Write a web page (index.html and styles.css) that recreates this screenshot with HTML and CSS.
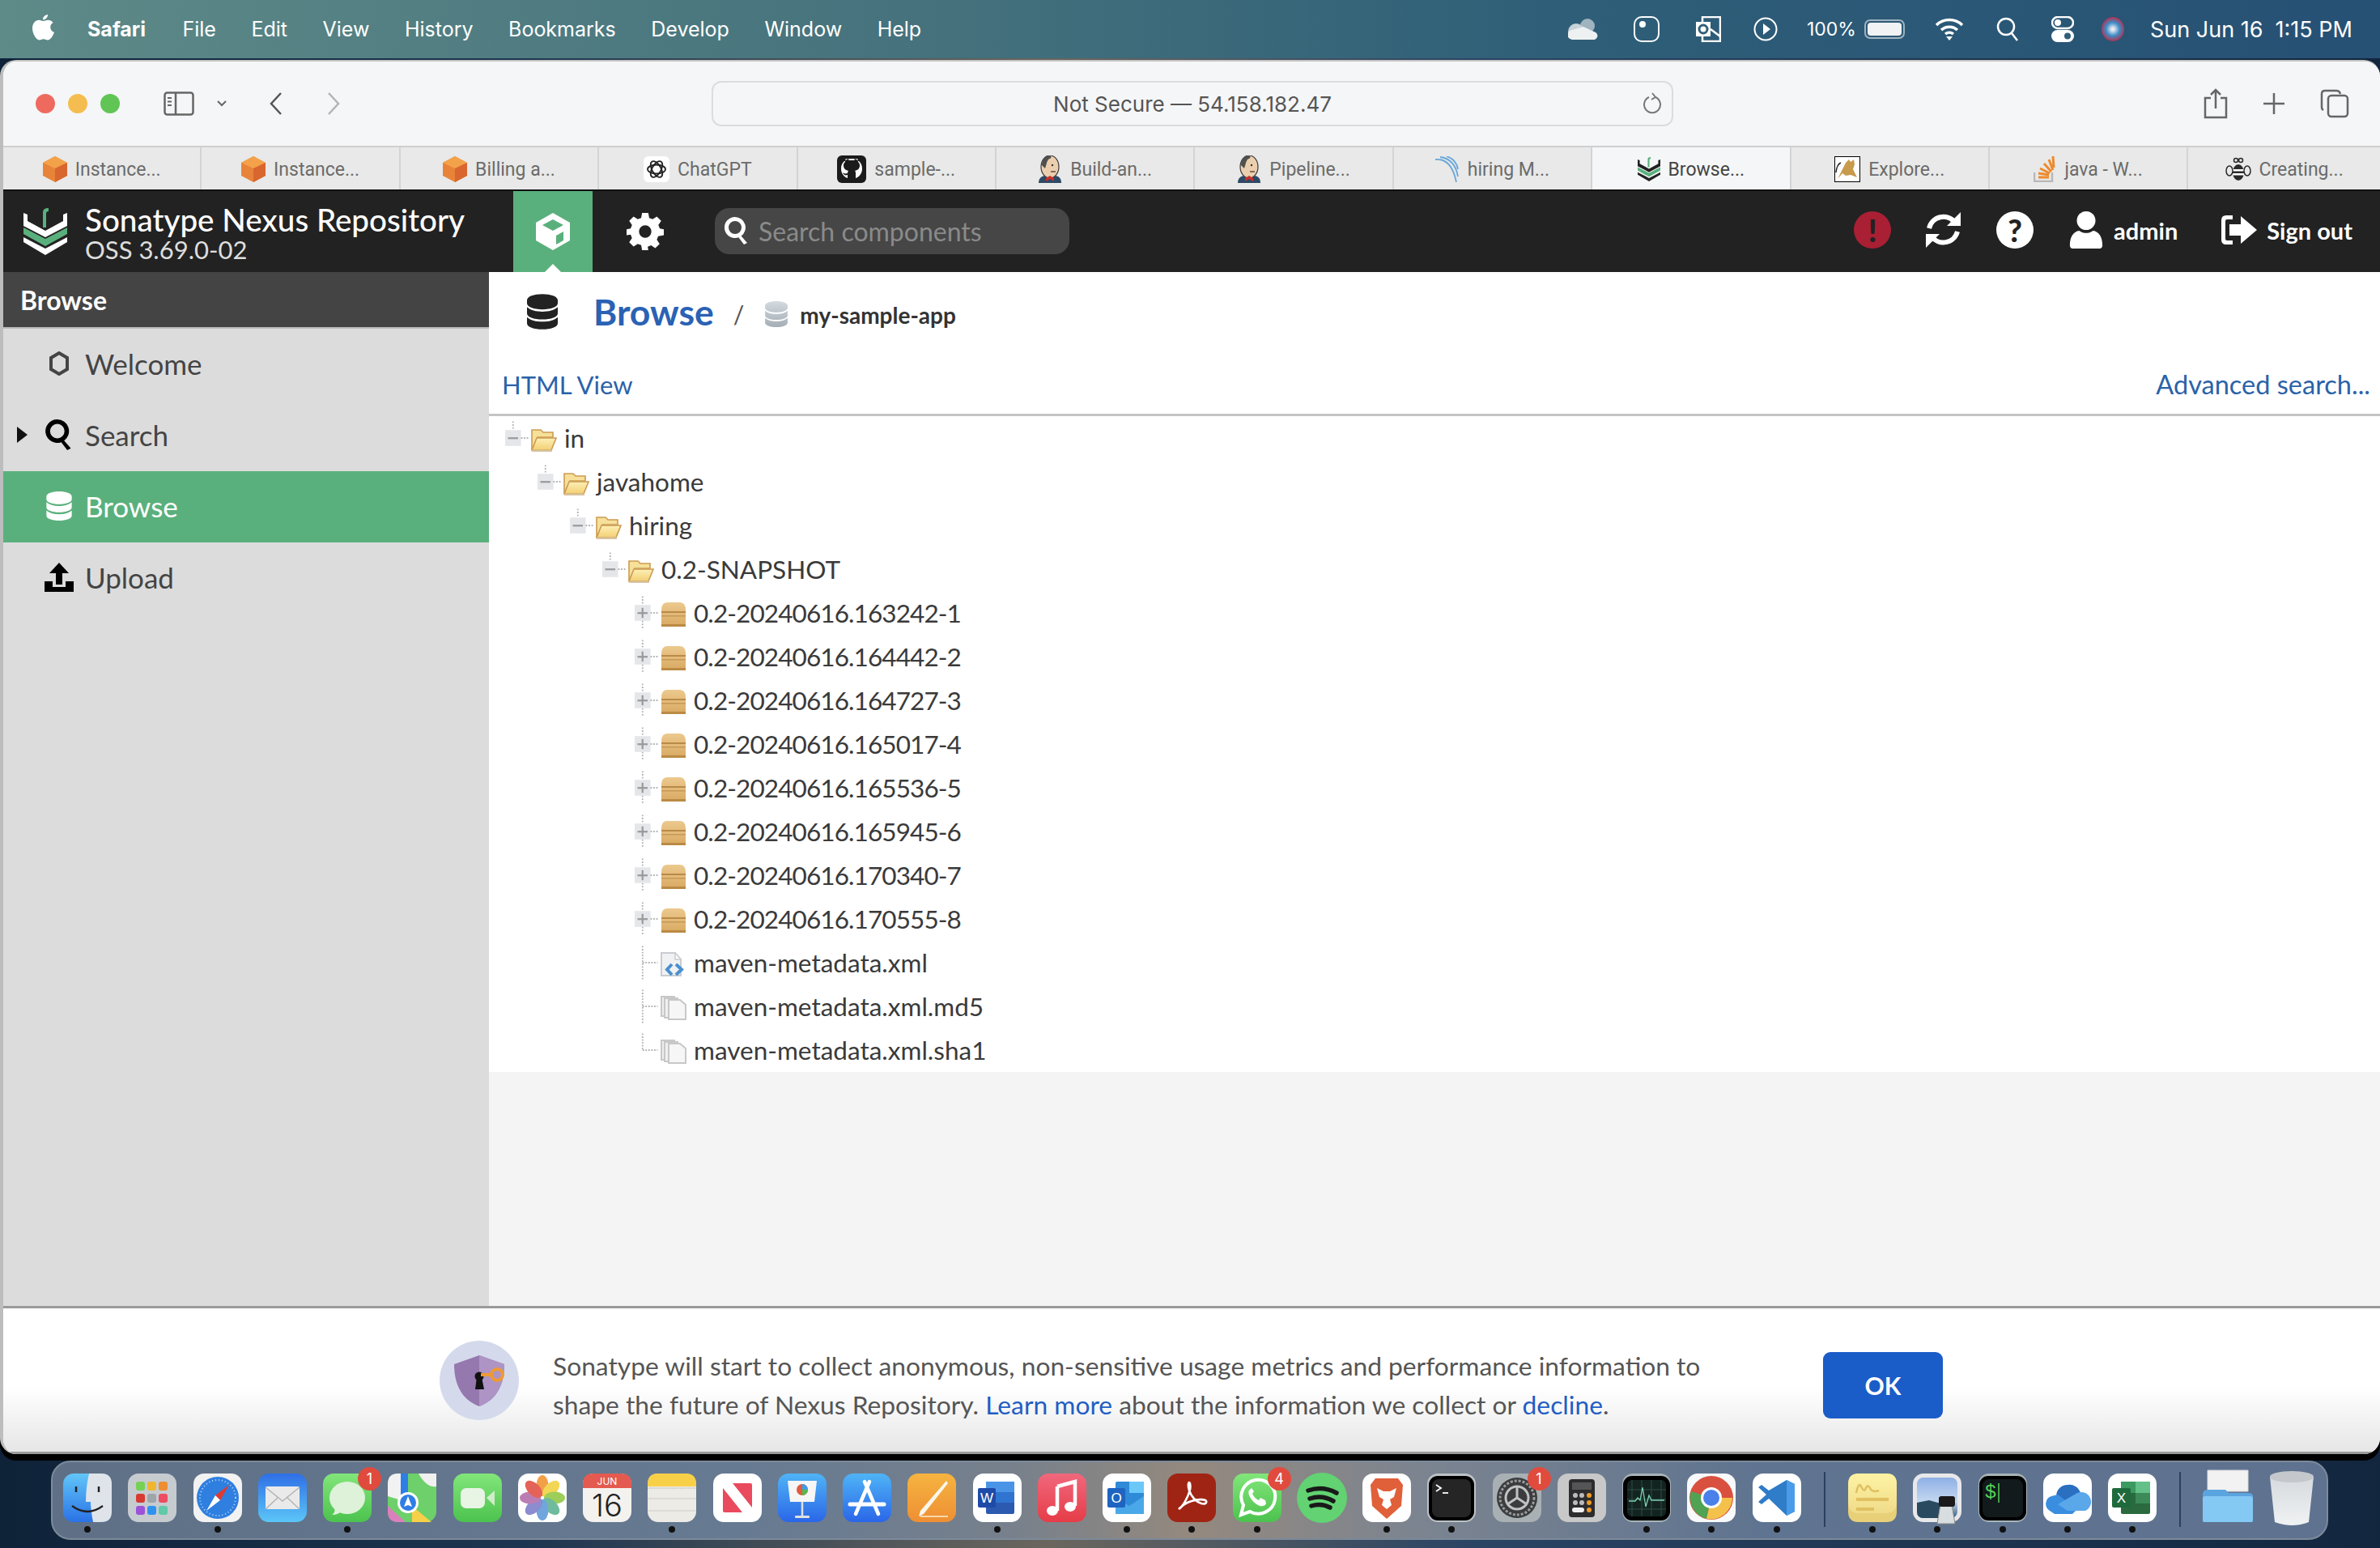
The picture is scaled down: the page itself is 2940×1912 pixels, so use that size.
FILE: index.html
```html
<!DOCTYPE html>
<html lang="en">
<head>
    <meta charset="UTF-8">
    <title>Browse - Nexus Repository Manager</title>
    <link rel="stylesheet" href="styles.css">
</head>
<body>

<svg class="defs" width="0" height="0">
    <defs>
        <linearGradient id="folderFill" x1="0" y1="0" x2="0" y2="1"><stop offset="0" stop-color="#fdf0b8"/><stop offset="1" stop-color="#f3cf72"/></linearGradient>
        <linearGradient id="boxFill" x1="0" y1="0" x2="0" y2="1"><stop offset="0" stop-color="#ecc98e"/><stop offset="1" stop-color="#d8a961"/></linearGradient>
        <linearGradient id="dbFill" x1="0" y1="0" x2="0" y2="1"><stop offset="0" stop-color="#d4dade"/><stop offset="1" stop-color="#a4aeb6"/></linearGradient>
        <linearGradient id="finderBlue" x1="0" y1="0" x2="0" y2="1"><stop offset="0" stop-color="#62c6f8"/><stop offset="1" stop-color="#2a72e6"/></linearGradient>
        <linearGradient id="mailBlue" x1="0" y1="0" x2="0" y2="1"><stop offset="0" stop-color="#2f6fe6"/><stop offset="1" stop-color="#5cc6f8"/></linearGradient>
        <linearGradient id="greenApp" x1="0" y1="0" x2="0" y2="1"><stop offset="0" stop-color="#82e67a"/><stop offset="1" stop-color="#4cc24e"/></linearGradient>
        <linearGradient id="keyBlue" x1="0" y1="0" x2="0" y2="1"><stop offset="0" stop-color="#4fb4f6"/><stop offset="1" stop-color="#2a66e8"/></linearGradient>
        <linearGradient id="orangeApp" x1="0" y1="0" x2="0" y2="1"><stop offset="0" stop-color="#f6b440"/><stop offset="1" stop-color="#ee8f34"/></linearGradient>
        <linearGradient id="musicRed" x1="0" y1="0" x2="0" y2="1"><stop offset="0" stop-color="#f0687c"/><stop offset="1" stop-color="#e63c48"/></linearGradient>
        <linearGradient id="noteYellow" x1="0" y1="0" x2="0" y2="1"><stop offset="0" stop-color="#fdf3a4"/><stop offset="1" stop-color="#f0dc8a"/></linearGradient>
        <linearGradient id="trashFill" x1="0" y1="0" x2="0" y2="1"><stop offset="0" stop-color="#d4d8dc"/><stop offset="1" stop-color="#f0f2f3"/></linearGradient>
        <linearGradient id="skyFill" x1="0" y1="0" x2="0" y2="1"><stop offset="0" stop-color="#8fb0e6"/><stop offset="0.6" stop-color="#c4d8f0"/><stop offset="1" stop-color="#34607e"/></linearGradient>

        <!-- tree connectors, 36 x 54 -->
        <g id="box"><rect x="0" y="16" width="22" height="22" fill="#e4e6ea"/><line x1="22" y1="27" x2="32" y2="27" stroke="#b0b0b0" stroke-width="2" stroke-dasharray="2 2"/></g>
        <symbol id="exp-minus" viewBox="0 0 36 54"><line x1="11" y1="4" x2="11" y2="16" stroke="#b0b0b0" stroke-width="2" stroke-dasharray="2 2"/><use href="#box"/><rect x="4" y="26" width="14" height="2.5" fill="#9a9a9a"/></symbol>
        <symbol id="exp-plus" viewBox="0 0 36 54"><line x1="11" y1="4" x2="11" y2="16" stroke="#b0b0b0" stroke-width="2" stroke-dasharray="2 2"/><line x1="11" y1="38" x2="11" y2="50" stroke="#b0b0b0" stroke-width="2" stroke-dasharray="2 2"/><use href="#box"/><rect x="4" y="26" width="14" height="2.5" fill="#9a9a9a"/><rect x="9.7" y="20" width="2.5" height="14" fill="#9a9a9a"/></symbol>
        <symbol id="leaf" viewBox="0 0 36 54"><line x1="11" y1="4" x2="11" y2="50" stroke="#b0b0b0" stroke-width="2" stroke-dasharray="2 2"/><line x1="11" y1="27" x2="32" y2="27" stroke="#b0b0b0" stroke-width="2" stroke-dasharray="2 2"/></symbol>
        <symbol id="leaf-end" viewBox="0 0 36 54"><line x1="11" y1="4" x2="11" y2="27" stroke="#b0b0b0" stroke-width="2" stroke-dasharray="2 2"/><line x1="11" y1="27" x2="32" y2="27" stroke="#b0b0b0" stroke-width="2" stroke-dasharray="2 2"/></symbol>

        <symbol id="folder-open" viewBox="0 0 32 30"><path d="M1 28V3h11l3 3h12v6H8L1 28z" fill="#f6e09a" stroke="#cc9c52" stroke-width="1.6"/><path d="M1 28l6-15h24l-6 15H1z" fill="url(#folderFill)" stroke="#cc9c52" stroke-width="1.6"/><rect x="1" y="27.5" width="25" height="2.5" fill="#d8c4a0"/></symbol>
        <symbol id="box-closed" viewBox="0 0 32 30"><path d="M1 10Q1 0 8 0h16q7 0 7 10v20H1z" fill="url(#boxFill)"/><rect x="1" y="11" width="30" height="2" fill="#b98a48"/><rect x="1" y="16" width="30" height="1.600" fill="#c89a58"/><rect x="1" y="27" width="30" height="3" fill="#bb8a44"/></symbol>
        <symbol id="file-xml" viewBox="0 0 32 30"><path d="M1 1h17l7 8v20H1z" fill="#f0f1f3" stroke="#c8ccd0" stroke-width="2"/><path d="M18 2v7h6" fill="#fff" stroke="#c8ccd0" stroke-width="1.500"/><path d="M14 15l-6 6.500 6 6.500M19 15l7 6.500-7 6.500" fill="none" stroke="#4a90d0" stroke-width="4"/></symbol>
        <symbol id="file-copy" viewBox="0 0 32 30"><rect x="1" y="1" width="16" height="24" fill="#eee" stroke="#c8c8c8" stroke-width="2"/><rect x="5" y="3" width="16" height="24" fill="#f0f0f0" stroke="#c8c8c8" stroke-width="2"/><path d="M10 5h14l7 6v18H10z" fill="#f6f6f6" stroke="#c8c8c8" stroke-width="2"/></symbol>
        <symbol id="db" viewBox="0 0 40 46"><path d="M20 0C9 0 0 3 0 8v4c0 5 9 8 20 8s20-3 20-8V8c0-5-9-8-20-8zM0 17v8c0 5 9 8 20 8s20-3 20-8v-8c-4 4-12 6-20 6S4 21 0 17zM0 30v8c0 5 9 8 20 8s20-3 20-8v-8c-4 4-12 6-20 6S4 34 0 30z"/></symbol>
        <symbol id="aws-cube" viewBox="0 0 30 32"><path d="M15 0L30 8v16l-15 8L0 24V8z" fill="#e8833a"/><path d="M15 0L30 8 15 15 0 8z" fill="#f3a24a"/><path d="M15 15l15-7v16l-15 8z" fill="#d9652f"/></symbol>
        <symbol id="jenkins" viewBox="0 0 30 34"><path d="M1 34c0-6 4-9 9-9h10c6 0 9 3 9 9z" fill="#2f4a66"/><ellipse cx="15" cy="14" rx="11" ry="14" fill="#eccfae" stroke="#3a3a3a" stroke-width="1.2"/><path d="M5 12C5 3 10 0 15 0c2 0 2 3 0 4-4 1-4 7-6 12z" fill="#50504e"/><path d="M15 25l-5 3v4l5-3 5 3v-4z" fill="#c8302c"/><circle cx="18" cy="12" r="1.2" fill="#333"/><path d="M16 20h6" stroke="#6a4a3a" stroke-width="1.4"/></symbol>
        <symbol id="nexus-logo" viewBox="0 0 54 58"><path d="M0 6l5 2v8l22 12 22-12V8l5-2v16L27 36 0 22z" fill="currentColor"/><path d="M0 24l27 14 27-14v8L27 47 0 32z" fill="#5ab07c"/><path d="M0 36l27 14 27-14v6L27 58 0 42z" fill="currentColor"/><path d="M24 24V5q0-5 7-5v4q-3 0-3 3v17z" fill="#5ab07c"/></symbol>
        <symbol id="gear" viewBox="0 0 24 24"><path d="M10 0h4l.6 3.2 2.2.9L19.500 2.300l2.800 2.800-1.800 2.700.9 2.200L24 10.600v3.800l-3.600.6-.9 2.200 1.800 2.700-2.800 2.800-2.700-1.800-2.200.9L14 24h-4l-.6-3.200-2.200-.9-2.700 1.800-2.800-2.800 1.800-2.700-.9-2.200L0 14.400v-3.800l2.600-.6.900-2.200-1.800-2.700 2.800-2.800 2.700 1.800 2.200-.9zM12 8a4 4 0 100 8 4 4 0 000-8z" fill-rule="evenodd"/></symbol>
        <symbol id="magnifier" viewBox="0 0 30 34"><path d="M13 0a13 13 0 017.600 23.500L28 32l-4 2-6.600-8.800A13 13 0 1113 0zm0 5a8 8 0 100 16 8 8 0 000-16z" fill-rule="evenodd"/></symbol>
    </defs>
</svg>

<header class="menubar">
    <svg class="apple" width="28" height="32" viewBox="0 0 28 32" fill="#fff"><path d="M19 0c.3 3-2.500 6.500-6 6.300C12.700 3 15.800.3 19 0zM13.500 8c1.500 0 3.200-1.300 6-1.300 2 0 4.500 1 6 3.300-5 3-4 10 1.500 12-1.500 4-4.500 9.500-8 9.500-2 0-3-1.300-5.300-1.300S10.500 31.500 8.500 31.500C4.500 31.500 0 23 0 17c0-6.500 4-10.300 8-10.300 2.300 0 4 1.300 5.500 1.300z"/></svg>
    <nav class="menu-items">
        <span class="app-name">Safari</span>
        <span>File</span>
        <span>Edit</span>
        <span>View</span>
        <span>History</span>
        <span>Bookmarks</span>
        <span>Develop</span>
        <span>Window</span>
        <span>Help</span>
    </nav>
    <div class="status-items">
        <svg class="cloud" width="40" height="28" viewBox="0 0 40 28"><circle cx="24" cy="10" r="9" fill="#9fb4bf"/><circle cx="10" cy="17" r="10" fill="#c7d3d8"/><path d="M6 27a6 6 0 01-1-12l14-4 15 7a5 5 0 01-1 9z" fill="#eef1f2"/></svg>
        <svg width="32" height="32" viewBox="0 0 32 32" fill="none" stroke="#fff" stroke-width="2"><rect x="1" y="1" width="30" height="30" rx="9"/><circle cx="11" cy="10" r="3" fill="#fff"/></svg>
        <svg class="outlook" width="32" height="32" viewBox="0 0 32 32"><rect x="9" y="1" width="22" height="30" fill="none" stroke="#fff" stroke-width="2.500"/><rect x="1" y="7" width="18" height="18" fill="#fff"/><circle cx="10" cy="16" r="5" fill="none" stroke="#315f78" stroke-width="3"/><path d="M19 16l12 9" stroke="#fff" stroke-width="2.500"/></svg>
        <svg width="30" height="30" viewBox="0 0 30 30"><circle cx="15" cy="15" r="13.500" fill="none" stroke="#fff" stroke-width="2"/><path d="M12 8l9 7-9 7z" fill="#fff"/></svg>
        <span class="battery-pct">100%</span>
        <span class="battery"><span class="battery-level"></span></span>
        <svg class="wifi" width="36" height="28" viewBox="0 0 36 28" fill="none" stroke="#fff" stroke-width="3.500"><path d="M2 9a23 23 0 0132 0M8 15a15 15 0 0120 0M13 20a8 8 0 0110 0"/><path d="M18 28l-4-5h8z" fill="#fff" stroke="none"/></svg>
        <svg width="28" height="30" viewBox="0 0 28 30" fill="none" stroke="#fff" stroke-width="2.500"><circle cx="12" cy="12" r="10"/><path d="M19 20l7 9"/></svg>
        <svg width="28" height="32" viewBox="0 0 28 32"><rect x="1" y="1" width="26" height="14" rx="7" fill="none" stroke="#fff" stroke-width="2.500"/><circle cx="8" cy="8" r="4" fill="#fff"/><rect x="0" y="17" width="28" height="15" rx="7.500" fill="#fff"/><circle cx="20" cy="24.500" r="4" fill="#315f78"/></svg>
        <span class="siri"></span>
        <span class="clock">Sun Jun 16&nbsp; 1:15 PM</span>
    </div>
</header>

<div class="window">
    <div class="toolbar">
        <span class="light red"></span>
        <span class="light yellow"></span>
        <span class="light green"></span>
        <svg class="sidebar-toggle" width="38" height="30" viewBox="0 0 38 30" fill="none" stroke="#666" stroke-width="2.500"><rect x="1.500" y="1.500" width="35" height="27" rx="3"/><path d="M15 1.500v27"/><path d="M5 8h5M5 12.500h5M5 17h5" stroke-width="2"/></svg>
        <svg class="chevron" width="12" height="8" viewBox="0 0 12 8" fill="none" stroke="#666" stroke-width="2"><path d="M1 1l5 5 5-5"/></svg>
        <svg class="nav-back" width="18" height="28" viewBox="0 0 18 28" fill="none" stroke="#555" stroke-width="2.500"><path d="M15 1L3 14l12 13"/></svg>
        <svg class="nav-forward" width="18" height="28" viewBox="0 0 18 28" fill="none" stroke="#b4b4b4" stroke-width="2.500"><path d="M3 1l12 13L3 27"/></svg>
        <div class="url-bar">
            <span>Not Secure — 54.158.182.47</span>
            <svg class="reload" width="24" height="28" viewBox="0 0 24 28" fill="none" stroke="#777" stroke-width="2"><path d="M16 6a10 10 0 11-8 0"/><path d="M12 1l4 5-5 3"/></svg>
        </div>
        <div class="toolbar-right">
            <svg width="30" height="38" viewBox="0 0 30 38" fill="none" stroke="#666" stroke-width="2.500"><path d="M9 12H2v24h26V12h-7M15 25V2M9 8l6-6 6 6"/></svg>
            <svg width="26" height="26" viewBox="0 0 26 26" stroke="#666" stroke-width="2.500"><path d="M13 0v26M0 13h26"/></svg>
            <svg width="36" height="36" viewBox="0 0 36 36" fill="none" stroke="#666" stroke-width="2.500"><rect x="10" y="8" width="24" height="26" rx="4"/><path d="M4 26Q2 25 2 22V6q0-4 4-4h14q4 0 5 4"/></svg>
        </div>
    </div>

    <div class="tabs">
        <div class="tab"><svg width="30" height="32"><use href="#aws-cube"/></svg><span>Instance...</span></div>
        <div class="tab"><svg width="30" height="32"><use href="#aws-cube"/></svg><span>Instance...</span></div>
        <div class="tab"><svg width="30" height="32"><use href="#aws-cube"/></svg><span>Billing a...</span></div>
        <div class="tab"><svg width="32" height="32" viewBox="0 0 32 32"><rect width="32" height="32" rx="6" fill="#fff"/><g fill="none" stroke="#222" stroke-width="1.800"><ellipse cx="16" cy="16" rx="11" ry="5.500"/><ellipse cx="16" cy="16" rx="11" ry="5.500" transform="rotate(60 16 16)"/><ellipse cx="16" cy="16" rx="11" ry="5.500" transform="rotate(120 16 16)"/></g></svg><span>ChatGPT</span></div>
        <div class="tab"><svg width="36" height="34" viewBox="0 0 36 34"><rect width="36" height="34" rx="6" fill="#1b1b1b"/><path d="M18 4C10 4 5 9 5 16c0 6 3 10 8 12v-4c-3 1-5 0-6-3 1 1 3 2 6 1 0-2 1-3 1-3-4-1-6-3-6-7 0-2 1-3 2-4 0-1 0-3 1-4 1 0 3 1 4 2h6c1-1 3-2 4-2 1 1 1 3 1 4 1 1 2 2 2 4 0 4-2 6-6 7 1 1 1 2 1 3v6c5-2 8-6 8-12 0-7-5-12-13-12z" fill="#fff"/></svg><span>sample-...</span></div>
        <div class="tab"><svg width="30" height="34"><use href="#jenkins"/></svg><span>Build-an...</span></div>
        <div class="tab"><svg width="30" height="34"><use href="#jenkins"/></svg><span>Pipeline...</span></div>
        <div class="tab"><svg width="30" height="32" viewBox="0 0 30 32" fill="none" stroke="#6aa6da" stroke-width="1.800"><path d="M0 4q20-2 26 28M6 1q18 2 22 24M14 0q12 4 14 16"/></svg><span>hiring M...</span></div>
        <div class="tab active"><svg class="tab-mark" width="28" height="32"><use href="#nexus-logo"/></svg><span>Browse...</span></div>
        <div class="tab"><svg width="32" height="32" viewBox="0 0 32 32"><rect x=".5" y=".5" width="31" height="31" fill="#fff" stroke="#000"/><path d="M4 28l6-12 4-8 4-4 2 3 4-3 1 6-2 6 5 10-8-3-6 1-4-3z" fill="#c89a4c"/><path d="M2 20q1-10 6-12" fill="none" stroke="#222" stroke-width="1.500"/></svg><span>Explore...</span></div>
        <div class="tab"><svg width="28" height="32" viewBox="0 0 28 32"><path d="M1 20v11h22V20" fill="none" stroke="#b8b8b8" stroke-width="2.500"/><path d="M6 26h13M6 21l13 2M8 15l12 6M13 9l9 10M19 4l5 13M24 0l1 14" stroke="#ee8a2c" stroke-width="3" fill="none"/></svg><span>java - W...</span></div>
        <div class="tab"><svg width="32" height="32" viewBox="0 0 32 32" fill="#2a2a2a"><ellipse cx="16" cy="20" rx="7" ry="10"/><rect x="9" y="16" width="14" height="2.500" fill="#fff"/><rect x="9" y="21" width="14" height="2.500" fill="#fff"/><circle cx="13" cy="5" r="2.500" fill="none" stroke="#2a2a2a" stroke-width="1.500"/><circle cx="19" cy="5" r="2.500" fill="none" stroke="#2a2a2a" stroke-width="1.500"/><ellipse cx="5" cy="18" rx="4" ry="6" fill="none" stroke="#2a2a2a" stroke-width="1.500"/><ellipse cx="27" cy="18" rx="4" ry="6" fill="none" stroke="#2a2a2a" stroke-width="1.500"/></svg><span>Creating...</span></div>
    </div>

    <div class="nexus-header">
        <svg class="nexus-mark" width="54" height="58"><use href="#nexus-logo"/></svg>
        <div class="brand">
            <div class="brand-name">Sonatype Nexus Repository</div>
            <div class="brand-version">OSS 3.69.0-02</div>
        </div>
        <div class="mode-tab">
            <svg width="48" height="48" viewBox="0 0 48 48"><path d="M24 1l21 12v22L24 47 3 35V13z" fill="#fff"/><path d="M24 9l13 7-13 7-13-7z" fill="#5ab07c"/><path d="M28 29l9-5v11l-9 5z" fill="#5ab07c"/></svg>
        </div>
        <svg class="gear" width="46" height="46" fill="#fff"><use href="#gear"/></svg>
        <div class="quick-search">
            <svg width="30" height="34" fill="#fff"><use href="#magnifier"/></svg>
            <span>Search components</span>
        </div>
        <div class="header-right">
            <span class="alert">!</span>
            <svg width="44" height="44" viewBox="0 0 44 44" fill="none" stroke="#fff" stroke-width="6"><path d="M4 20A18 18 0 0136 13"/><path d="M39 24A18 18 0 017 30"/><path d="M43 0v17H26z" fill="#fff" stroke="none"/><path d="M0 44V27h17z" fill="#fff" stroke="none"/></svg>
            <span class="help">?</span>
            <svg class="person" width="42" height="46" viewBox="0 0 42 48" fill="#fff"><circle cx="21" cy="12" r="12"/><path d="M0 44c0-12 5-18 12-19 3 2 6 3 9 3s6-1 9-3c7 1 12 7 12 19 0 3-2 4-5 4H5c-3 0-5-1-5-4z"/></svg>
            <span class="user-name">admin</span>
            <svg class="sign-out-icon" width="44" height="36" viewBox="0 0 44 36" fill="#fff"><path d="M14 0H6Q0 0 0 6v24q0 6 6 6h8v-5H7q-2 0-2-2V7q0-2 2-2h7z"/><path d="M10 11h14V1l20 17-20 17V25H10z"/></svg>
            <span class="sign-out">Sign out</span>
        </div>
    </div>

    <div class="app-body">
        <aside class="sidebar">
            <div class="sidebar-title">Browse</div>
            <a class="side-item">
                <svg width="24" height="30" viewBox="0 0 24 30" fill="none" stroke="#444" stroke-width="4"><path d="M12 2l10 6v14l-10 6-10-6V8z"/></svg>
                <span>Welcome</span>
            </a>
            <a class="side-item">
                <span class="side-arrow"></span>
                <svg width="36" height="38" fill="#000"><use href="#magnifier"/></svg>
                <span>Search</span>
            </a>
            <a class="side-item selected">
                <svg width="32" height="36" fill="#fff"><use href="#db"/></svg>
                <span>Browse</span>
            </a>
            <a class="side-item">
                <svg width="36" height="36" viewBox="0 0 36 36"><path d="M18 0l12 13h-8v14h-8V13H6z"/><path d="M0 23h10v7h16v-7h10v13H0z"/></svg>
                <span>Upload</span>
            </a>
        </aside>

        <main class="main">
            <div class="breadcrumb">
                <svg class="bc-db" width="38" height="46" fill="#222"><use href="#db"/></svg>
                <span class="bc-title">Browse</span>
                <span class="bc-sep">/</span>
                <svg class="bc-repo" width="28" height="32" fill="url(#dbFill)"><use href="#db"/></svg>
                <span class="bc-repo-name">my-sample-app</span>
            </div>
            <div class="view-links">
                <a class="html-view">HTML View</a>
                <a class="advanced">Advanced search...</a>
            </div>
            <div class="tree">
                <div class="tree-row level-0"><svg class="conn"><use href="#exp-minus"/></svg><svg class="node"><use href="#folder-open"/></svg><span>in</span></div>
                <div class="tree-row level-1"><svg class="conn"><use href="#exp-minus"/></svg><svg class="node"><use href="#folder-open"/></svg><span>javahome</span></div>
                <div class="tree-row level-2"><svg class="conn"><use href="#exp-minus"/></svg><svg class="node"><use href="#folder-open"/></svg><span>hiring</span></div>
                <div class="tree-row level-3"><svg class="conn"><use href="#exp-minus"/></svg><svg class="node"><use href="#folder-open"/></svg><span>0.2-SNAPSHOT</span></div>
                <div class="tree-row level-4"><svg class="conn"><use href="#exp-plus"/></svg><svg class="node"><use href="#box-closed"/></svg><span class="version">0.2-20240616.163242-1</span></div>
                <div class="tree-row level-4"><svg class="conn"><use href="#exp-plus"/></svg><svg class="node"><use href="#box-closed"/></svg><span class="version">0.2-20240616.164442-2</span></div>
                <div class="tree-row level-4"><svg class="conn"><use href="#exp-plus"/></svg><svg class="node"><use href="#box-closed"/></svg><span class="version">0.2-20240616.164727-3</span></div>
                <div class="tree-row level-4"><svg class="conn"><use href="#exp-plus"/></svg><svg class="node"><use href="#box-closed"/></svg><span class="version">0.2-20240616.165017-4</span></div>
                <div class="tree-row level-4"><svg class="conn"><use href="#exp-plus"/></svg><svg class="node"><use href="#box-closed"/></svg><span class="version">0.2-20240616.165536-5</span></div>
                <div class="tree-row level-4"><svg class="conn"><use href="#exp-plus"/></svg><svg class="node"><use href="#box-closed"/></svg><span class="version">0.2-20240616.165945-6</span></div>
                <div class="tree-row level-4"><svg class="conn"><use href="#exp-plus"/></svg><svg class="node"><use href="#box-closed"/></svg><span class="version">0.2-20240616.170340-7</span></div>
                <div class="tree-row level-4"><svg class="conn"><use href="#exp-plus"/></svg><svg class="node"><use href="#box-closed"/></svg><span class="version">0.2-20240616.170555-8</span></div>
                <div class="tree-row level-4"><svg class="conn"><use href="#leaf"/></svg><svg class="node"><use href="#file-xml"/></svg><span>maven-metadata.xml</span></div>
                <div class="tree-row level-4"><svg class="conn"><use href="#leaf"/></svg><svg class="node"><use href="#file-copy"/></svg><span>maven-metadata.xml.md5</span></div>
                <div class="tree-row level-4"><svg class="conn"><use href="#leaf-end"/></svg><svg class="node"><use href="#file-copy"/></svg><span>maven-metadata.xml.sha1</span></div>
            </div>
        </main>
    </div>

    <div class="banner">
        <svg class="banner-icon" width="100" height="98" viewBox="0 0 100 98"><circle cx="50" cy="49" r="49" fill="#d4daec"/><path d="M50 18l31 11c0 26-10 44-31 52-21-8-31-26-31-52z" fill="#9578ae"/><path d="M50 18l31 11c0 26-10 44-31 52z" fill="#ad94c4"/><circle cx="50" cy="44" r="5.500" fill="#111"/><path d="M47 45h6l3 15H45z" fill="#111"/><path d="M52 42h15" stroke="#ee9a34" stroke-width="4"/><circle cx="72" cy="42" r="7" fill="none" stroke="#ee9a34" stroke-width="4"/></svg>
        <p class="banner-text">Sonatype will start to collect anonymous, non-sensitive usage metrics and performance information to<br>shape the future of Nexus Repository. <a>Learn more</a> about the information we collect or <a>decline</a>.</p>
        <button type="button" class="ok-btn">OK</button>
    </div>
</div>

<footer class="dock">
    <div class="dock-item on"><svg viewBox="0 0 60 60"><rect width="60" height="60" rx="13" fill="url(#finderBlue)"/><path d="M32 0h15q13 0 13 13v34q0 13-13 13H37q-3-15-3-25h-6q0-18 4-35z" fill="#dfe4ea"/><path d="M16 16v7M44 16v7" stroke="#222" stroke-width="2.500"/><path d="M11 40q19 14 38 0" fill="none" stroke="#222" stroke-width="2.200"/></svg></div>
    <div class="dock-item"><svg viewBox="0 0 60 60"><rect width="60" height="60" rx="13" fill="#c6cbd0"/><rect x="10" y="10" width="11" height="11" rx="3" fill="#76d254"/><rect x="24" y="10" width="11" height="11" rx="3" fill="#f0b630"/><rect x="38" y="10" width="11" height="11" rx="3" fill="#ee8e30"/><rect x="10" y="25" width="11" height="11" rx="3" fill="#d63a30"/><rect x="24" y="25" width="11" height="11" rx="3" fill="#9ea6ac"/><rect x="38" y="25" width="11" height="11" rx="3" fill="#ee4c62"/><rect x="10" y="40" width="11" height="11" rx="3" fill="#9c52d8"/><rect x="24" y="40" width="11" height="11" rx="3" fill="#2f92ee"/><rect x="38" y="40" width="11" height="11" rx="3" fill="#5ecaa8"/></svg></div>
    <div class="dock-item on"><svg viewBox="0 0 60 60"><rect width="60" height="60" rx="13" fill="#f2f2f2"/><circle cx="30" cy="30" r="26" fill="#2f7fe0"/><circle cx="30" cy="30" r="22" fill="none" stroke="#bcd8f6" stroke-width="2" stroke-dasharray="1 3"/><path d="M44 14L27 27l6 6z" fill="#e0392f"/><path d="M16 46l11-19 6 6z" fill="#fff"/></svg></div>
    <div class="dock-item"><svg viewBox="0 0 60 60"><rect width="60" height="60" rx="13" fill="url(#mailBlue)"/><rect x="9" y="16" width="42" height="28" rx="2" fill="#eaeaea"/><path d="M9 17l21 17 21-17M9 44l16-15M51 44L35 29" fill="none" stroke="#b4b4b4" stroke-width="1.500"/></svg></div>
    <div class="dock-item on"><svg viewBox="0 0 60 60"><rect width="60" height="60" rx="13" fill="url(#greenApp)"/><ellipse cx="30" cy="30" rx="22" ry="20" fill="#ddf2d8"/><path d="M14 42q2 6-3 9 8 0 13-5z" fill="#ddf2d8"/></svg><span class="dock-badge">1</span></div>
    <div class="dock-item"><svg viewBox="0 0 60 60"><rect width="60" height="60" rx="13" fill="#6dd06a"/><path d="M0 13Q0 0 13 0h7v34L0 28z" fill="#f2f2f2"/><path d="M16 0h9v26h-9z" fill="#2f7ee6"/><path d="M38 0h22v16Q48 18 38 0z" fill="#f0f0f0"/><path d="M0 40l22 20H13Q0 60 0 47z" fill="#dc80bc"/><path d="M30 40l24 20q-6 0-11 0H30z" fill="#f6d048"/><circle cx="25" cy="36" r="13" fill="#fff"/><circle cx="25" cy="36" r="10" fill="#2f7ee6"/><path d="M25 28l5 13-5-2-5 2z" fill="#fff"/></svg></div>
    <div class="dock-item"><svg viewBox="0 0 60 60"><rect width="60" height="60" rx="13" fill="url(#greenApp)"/><rect x="9" y="18" width="30" height="25" rx="7" fill="#e8f4e4"/><path d="M41 30l10-9v19z" fill="#d0ecca"/></svg></div>
    <div class="dock-item"><svg viewBox="0 0 60 60"><rect width="60" height="60" rx="13" fill="#fff"/><g transform="translate(30 30)" opacity=".85"><ellipse cy="-15" rx="7.500" ry="13" fill="#f09028"/><ellipse cy="-15" rx="7.500" ry="13" fill="#f0d038" transform="rotate(45)"/><ellipse cy="-15" rx="7.500" ry="13" fill="#8cc63e" transform="rotate(90)"/><ellipse cy="-15" rx="7.500" ry="13" fill="#58b08c" transform="rotate(135)"/><ellipse cy="-15" rx="7.500" ry="13" fill="#5896d8" transform="rotate(180)"/><ellipse cy="-15" rx="7.500" ry="13" fill="#7878c8" transform="rotate(225)"/><ellipse cy="-15" rx="7.500" ry="13" fill="#b068a8" transform="rotate(270)"/><ellipse cy="-15" rx="7.500" ry="13" fill="#e0483c" transform="rotate(315)"/></g></svg></div>
    <div class="dock-item"><svg viewBox="0 0 60 60"><rect width="60" height="60" rx="13" fill="#f4f2ee"/><path d="M0 18V13Q0 0 13 0h34q13 0 13 13v5z" fill="#e45a50"/><text x="30" y="14" class="cal-month">JUN</text><text x="30" y="53" class="cal-day">16</text></svg></div>
    <div class="dock-item on"><svg viewBox="0 0 60 60"><rect width="60" height="60" rx="13" fill="#ecebe6"/><path d="M0 16V13Q0 0 13 0h34q13 0 13 13v3z" fill="#f8d048"/><path d="M0 31h60M0 46h60" stroke="#d8d6d0" stroke-width="1.500"/><path d="M0 18h60" stroke="#c0bcb0" stroke-width="1.500" stroke-dasharray="1 1"/></svg></div>
    <div class="dock-item"><svg viewBox="0 0 60 60"><rect width="60" height="60" rx="13" fill="#fff"/><rect x="12" y="12" width="36" height="36" rx="2" fill="#e94a5e"/><path d="M12 12h12l24 30v6H36L12 18z" fill="#fff"/></svg></div>
    <div class="dock-item"><svg viewBox="0 0 60 60"><rect width="60" height="60" rx="13" fill="url(#keyBlue)"/><path d="M12 9h36l-3 26H15z" fill="#f6f6f6"/><circle cx="30" cy="20" r="7" fill="#e25a3c"/><path d="M30 20v-7a7 7 0 017 7z" fill="#3a9ee8"/><path d="M30 20h7a7 7 0 01-7 7z" fill="#58b84c"/><path d="M30 35v18" stroke="#e0e0e0" stroke-width="2.500"/><rect x="21" y="52" width="18" height="3" rx="1" fill="#e0e0e0"/></svg></div>
    <div class="dock-item"><svg viewBox="0 0 60 60"><rect width="60" height="60" rx="13" fill="url(#keyBlue)"/><path d="M16 50l17-40M44 50L27 10" stroke="#fff" stroke-width="4.500" stroke-linecap="round"/><path d="M9 38h42" stroke="#fff" stroke-width="5" stroke-linecap="round"/></svg></div>
    <div class="dock-item"><svg viewBox="0 0 60 60"><rect width="60" height="60" rx="13" fill="url(#orangeApp)"/><path d="M48 9L16 46l-2 7 6-3 30-38z" fill="#fbf6ea"/><path d="M16 53h34" stroke="#f9d8a8" stroke-width="2"/></svg></div>
    <div class="dock-item on"><svg viewBox="0 0 60 60"><rect width="60" height="60" rx="13" fill="#fff"/><rect x="16" y="10" width="35" height="40" rx="2" fill="#2c5ab0"/><rect x="16" y="10" width="35" height="13" fill="#4a94e8"/><rect x="16" y="23" width="35" height="13" fill="#2f74d0"/><rect x="6" y="18" width="22" height="24" rx="2" fill="#1e4aa8"/><text x="17" y="36" class="app-letter">W</text></svg></div>
    <div class="dock-item"><svg viewBox="0 0 60 60"><rect width="60" height="60" rx="13" fill="url(#musicRed)"/><path d="M24 16l22-6v30" fill="none" stroke="#fff" stroke-width="4.500"/><path d="M24 16v30" stroke="#fff" stroke-width="4.500"/><ellipse cx="18" cy="46" rx="7" ry="6" fill="#fff"/><ellipse cx="40" cy="41" rx="7" ry="6" fill="#fff"/></svg></div>
    <div class="dock-item on"><svg viewBox="0 0 60 60"><rect width="60" height="60" rx="13" fill="#fff"/><rect x="16" y="10" width="35" height="40" rx="2" fill="#2f8ad8"/><rect x="33" y="10" width="18" height="14" fill="#6cc8f8"/><path d="M16 30l17 10 18-12v22H16z" fill="#4aa8e8"/><rect x="6" y="18" width="22" height="24" rx="2" fill="#1e64c0"/><text x="17" y="36" class="app-letter">O</text></svg></div>
    <div class="dock-item on"><svg viewBox="0 0 60 60"><rect width="60" height="60" rx="13" fill="#a02414"/><path d="M14 44c5-3 11-13 14-24 1-5 0-9-1-9s-2 4 0 10c3 8 9 14 15 16 4 1 7 0 6-3-1-2-9-3-18 0-7 2-14 8-16 10z" fill="none" stroke="#fff" stroke-width="2.600"/></svg></div>
    <div class="dock-item on"><svg viewBox="0 0 60 60"><rect width="60" height="60" rx="13" fill="url(#greenApp)"/><path d="M10 51l3-12a21 21 0 118 8z" fill="none" stroke="#fff" stroke-width="4"/><path d="M22 19q-4 2-2 8 4 9 13 13 6 1 8-3l-1-4-6-3-2 3q-5-2-8-8l2-3-3-4z" fill="#fff"/></svg><span class="dock-badge">4</span></div>
    <div class="dock-item"><svg viewBox="0 0 60 60"><circle cx="30" cy="30" r="31" fill="#62d272"/><path d="M13 21q18-6 35 3M15 31q15-5 29 3M17 40q12-4 23 2" fill="none" stroke="#191919" stroke-width="5.500" stroke-linecap="round"/></svg></div>
    <div class="dock-item on"><svg viewBox="0 0 60 60"><rect width="60" height="60" rx="13" fill="#fff"/><path d="M16 6h28l6 8-2 26-18 16-18-16-2-26z" fill="#e0603a"/><path d="M18 18l8 4h8l8-4-3 11-5 3 2 7-6 5-6-5 2-7-5-3z" fill="#fff"/></svg></div>
    <div class="dock-item on"><svg viewBox="0 0 60 60"><rect width="60" height="60" rx="13" fill="#bcc2c6"/><rect x="2" y="3" width="56" height="55" rx="11" fill="#000"/><rect x="6" y="7" width="48" height="47" rx="8" fill="#252525"/><path d="M11 14l6 4-6 4" fill="none" stroke="#fff" stroke-width="1.800"/><path d="M19 24h7" stroke="#fff" stroke-width="1.800"/></svg></div>
    <div class="dock-item"><svg viewBox="0 0 60 60"><rect width="60" height="60" rx="13" fill="#a8b0b4"/><circle cx="30" cy="30" r="25" fill="#3a3c3e"/><circle cx="30" cy="30" r="21" fill="none" stroke="#9a9c9e" stroke-width="3" stroke-dasharray="3 2"/><circle cx="30" cy="30" r="14" fill="none" stroke="#c0c2c4" stroke-width="3"/><path d="M30 30V16M30 30l12 8M30 30l-12 8" stroke="#c0c2c4" stroke-width="3"/></svg><span class="dock-badge">1</span></div>
    <div class="dock-item"><svg viewBox="0 0 60 60"><rect width="60" height="60" rx="13" fill="#c8c8c8"/><rect x="14" y="7" width="32" height="47" rx="4" fill="#2c2c2e"/><rect x="18" y="11" width="24" height="9" fill="#555"/><g fill="#bbb"><circle cx="22" cy="27" r="3"/><circle cx="30" cy="27" r="3"/><circle cx="22" cy="36" r="3"/><circle cx="30" cy="36" r="3"/></g><g fill="#f09a28"><circle cx="39" cy="27" r="3"/><circle cx="39" cy="36" r="3"/><circle cx="39" cy="45" r="3"/></g><rect x="18" y="42" width="15" height="6" rx="3" fill="#eee"/></svg></div>
    <div class="dock-item on"><svg viewBox="0 0 60 60"><rect width="60" height="60" rx="13" fill="#a8b4b8"/><rect x="1" y="3" width="58" height="55" rx="11" fill="#000"/><rect x="6" y="8" width="48" height="45" rx="6" fill="#132420"/><path d="M12 8v45M24 8v45M36 8v45M48 8v45M6 20h48M6 32h48M6 44h48" stroke="#2e4a44" stroke-width="1"/><path d="M8 34h8l3-4 3 3 3-16 4 24 4-14 3 6h16" fill="none" stroke="#7ed0b0" stroke-width="1.300"/></svg></div>
    <div class="dock-item on"><svg viewBox="0 0 60 60"><rect width="60" height="60" rx="13" fill="#f8f9fa"/><circle cx="30" cy="30" r="27" fill="#d9503f"/><path d="M30 30L5 22a27 27 0 0019 34z" fill="#4fa352"/><path d="M30 30h26a27 27 0 01-32 26z" fill="#f4c24a"/><circle cx="30" cy="30" r="13" fill="#fff"/><circle cx="30" cy="30" r="10" fill="#4a80ea"/></svg></div>
    <div class="dock-item on"><svg viewBox="0 0 60 60"><rect width="60" height="60" rx="13" fill="#fff"/><path d="M42 8l10 5v34l-10 5-22-21 -9 7-4-3 10-9-10-9 4-3 9 7z" fill="#2f7cc8"/><path d="M42 8l10 5v34l-10 5z" fill="#4a9cea"/></svg></div>
    <div class="dock-sep"></div>
    <div class="dock-item on"><svg viewBox="0 0 60 60"><path d="M0 20V13Q0 0 13 0h34q13 0 13 13v34q0 13-13 13H13Q0 60 0 47z" fill="#e8d078"/><path d="M0 13Q0 0 13 0h34q13 0 13 13v22q0 14-14 14H14Q0 49 0 35z" fill="url(#noteYellow)"/><path d="M10 24q3-14 6-8t5 4q3-8 6-2t11 3" fill="none" stroke="#e0c060" stroke-width="2.500"/><path d="M10 32h40M10 44h22" stroke="#e0c060" stroke-width="4"/></svg></div>
    <div class="dock-item on"><svg viewBox="0 0 60 60"><rect width="60" height="60" rx="13" fill="#e8e8ea"/><rect x="5" y="5" width="50" height="50" rx="8" fill="url(#skyFill)"/><path d="M5 36l15-3 14 4v18H13q-8 0-8-8z" fill="#2a4a60"/><path d="M30 62l4-24h14l4 24z" fill="#d8dde0" stroke="#888" stroke-width="1"/><rect x="32" y="28" width="20" height="13" rx="3" fill="#1a1a1a"/></svg></div>
    <div class="dock-item on"><svg viewBox="0 0 60 60"><rect width="60" height="60" rx="13" fill="#a8b4b8"/><rect x="1" y="3" width="58" height="55" rx="11" fill="#000"/><rect x="5" y="7" width="50" height="47" rx="8" fill="#121a1c"/><text x="15" y="30" class="prompt">$</text><path d="M25 12v24" stroke="#54d058" stroke-width="1.500"/></svg></div>
    <div class="dock-item on"><svg viewBox="0 0 60 60"><rect width="60" height="60" rx="13" fill="#fff"/><path d="M30 14a14 14 0 0116 10l-16 12-14-8a14 14 0 0114-14z" fill="#2a6fc0"/><path d="M8 46a10 10 0 012-18l8-2 24 18-6 6H14z" fill="#3a8ee0"/><path d="M42 24a10 10 0 0110 22H30L18 38z" fill="#5aa8ea"/></svg></div>
    <div class="dock-item on"><svg viewBox="0 0 60 60"><rect width="60" height="60" rx="13" fill="#fff"/><rect x="16" y="10" width="36" height="40" rx="2" fill="#2a6a3e"/><rect x="34" y="10" width="18" height="14" fill="#62c088"/><rect x="16" y="10" width="18" height="14" fill="#3c9a60"/><rect x="34" y="24" width="18" height="13" fill="#3c8a58"/><rect x="5" y="18" width="23" height="24" rx="2" fill="#1e6a3c"/><text x="16.500" y="36" class="app-letter">X</text></svg></div>
    <div class="dock-sep"></div>
    <div class="dock-item downloads"><svg viewBox="0 0 64 68" class="folder"><path d="M6 2h50v26H6z" fill="#f2f2f2" stroke="#d8d8d8"/><path d="M0 66V32q0-6 6-6h22l4 4h24q6 0 6 4v32z" fill="#5ba4e0"/><rect x="0" y="34" width="62" height="32" rx="3" fill="#84c8f4"/></svg></div>
    <div class="dock-item"><svg viewBox="0 0 60 68" class="trash"><path d="M3 8q27-10 54 0l-6 56q-20 8-42 0z" fill="url(#trashFill)"/><ellipse cx="30" cy="8" rx="27" ry="7" fill="#c4c8cc"/></svg></div>
</footer>

</body>
</html>
```
FILE: styles.css
```css
* {
    box-sizing: border-box;
}

html, body {
    margin: 0;
    height: 100%;
}

body {
    width: 2940px;
    height: 1912px;
    overflow: hidden;
    font-family: Lato, "Open Sans", sans-serif;
    background: linear-gradient(90deg, #0e2238 0%, #1d3550 22%, #6a665e 44%, #2a4464 62%, #12263e 100%);
}

.defs {
    position: absolute;
}

svg {
    display: block;
    flex-shrink: 0;
}

/* mac menu bar */
.menubar {
    height: 72px;
    margin-bottom: 2px;
    display: flex;
    align-items: center;
    padding: 0 34px 0 40px;
    color: #fff;
    font-family: Inter, sans-serif;
    font-size: 25px;
    background: linear-gradient(90deg, #5e8a88 0%, #44717c 40%, #2f5f78 65%, #265074 100%);
}

.apple {
    margin-right: 40px;
    margin-top: -4px;
}

.menu-items {
    display: flex;
    gap: 43.5px;
}

.app-name {
    font-weight: 700;
    margin-right: 2px;
}

.status-items {
    margin-left: auto;
    display: flex;
    align-items: center;
    gap: 40px;
}

.cloud {
    margin-right: 1px;
}

.outlook {
    margin-left: 4px;
}

.battery-pct {
    font-size: 23px;
    margin-left: -4px;
    margin-right: -30px;
}

.battery {
    width: 50px;
    height: 24px;
    border: 2px solid #9fb3c0;
    border-radius: 7px;
    padding: 2px;
}

.battery-level {
    display: block;
    height: 100%;
    background: #f0f2f3;
    border-radius: 4px;
}

.wifi {
    margin-left: -3px;
}

.siri {
    width: 28px;
    height: 30px;
    border-radius: 50%;
    background: radial-gradient(circle at 50% 50%, #e8e8f0 8%, #3c8ec8 40%, #a8385a 70%, #30405a 100%);
    margin-left: -6px;
}

.clock {
    margin-left: -8px;
    font-size: 27px;
    white-space: nowrap;
}

/* browser window */
.window {
    height: 1722px;
    display: flex;
    flex-direction: column;
    background: #fff;
    border-left: 4px solid #bdbdbd;
    border-top: 2px solid #c4c4c4;
    border-radius: 20px;
    overflow: hidden;
    box-shadow: 0 8px 0 #000;
}

.toolbar {
    height: 104px;
    display: flex;
    align-items: center;
    padding: 0 38px 0 40px;
    background: #f5f6f7;
}

.light {
    width: 24px;
    height: 24px;
    border-radius: 50%;
    margin-right: 16px;
}

.light.red { background: #ee6a5f; }
.light.yellow { background: #f5bd4f; }
.light.green { background: #61c555; }

.sidebar-toggle {
    margin-left: 38px;
}

.chevron {
    margin-left: 28px;
}

.nav-back {
    margin-left: 52px;
}

.nav-forward {
    margin-left: 53px;
}

.url-bar {
    position: relative;
    width: 1188px;
    height: 56px;
    margin-left: 458px;
    border: 2px solid #dcdcdc;
    border-radius: 12px;
    display: flex;
    align-items: center;
    justify-content: center;
    font-family: Inter, sans-serif;
    font-size: 26px;
    color: #555;
}

.reload {
    position: absolute;
    right: 12px;
    top: 12px;
}

.toolbar-right {
    margin-left: auto;
    display: flex;
    align-items: center;
    gap: 44px;
}

.tabs {
    height: 56px;
    display: flex;
    background: #e8e9e8;
    border-top: 2px solid #cfcfcf;
    border-bottom: 2px solid #111;
}

.tab {
    width: 245.4px;
    padding-top: 2px;
    display: flex;
    align-items: center;
    justify-content: center;
    gap: 10px;
    border-right: 2px solid #d4d4d4;
    font-family: Roboto, sans-serif;
    font-size: 23px;
    color: #6b6b6b;
}

.tab:last-child {
    flex: 1;
    border-right: 0;
}

.tab.active {
    background: #f5f6f7;
    color: #444;
}

.tab-mark {
    color: #222;
}

/* nexus header */
.nexus-header {
    height: 100px;
    display: flex;
    align-items: center;
    color: #fff;
    background: #222;
    flex-shrink: 0;
}

.nexus-mark {
    margin-left: 25px;
    color: #fff;
}

.brand {
    margin-left: 22px;
    width: 529px;
}

.brand-name {
    font-size: 38.6px;
    font-weight: 500;
    line-height: 44px;
    white-space: nowrap;
}

.brand-version {
    font-size: 31px;
    line-height: 30px;
    color: #ddd;
}

.mode-tab {
    position: relative;
    width: 98px;
    height: 100px;
    background: #5ab07c;
    display: flex;
    align-items: center;
    justify-content: center;
}

.mode-tab::after {
    content: "";
    position: absolute;
    bottom: 0;
    left: 39px;
    border-left: 10px solid transparent;
    border-right: 10px solid transparent;
    border-bottom: 10px solid #fff;
}

.gear {
    margin-left: 42px;
}

.quick-search {
    width: 438px;
    height: 57px;
    margin: -2px 0 0 63px;
    padding-left: 12px;
    display: flex;
    align-items: center;
    gap: 12px;
    background: #464646;
    border-radius: 18px;
    color: #8a8a8a;
    font-size: 32px;
}

.header-right {
    margin-left: auto;
    padding: 0 34px 4px 0;
    display: flex;
    align-items: center;
    font-size: 29px;
    font-weight: 700;
}

.alert, .help {
    width: 46px;
    height: 46px;
    border-radius: 50%;
    display: flex;
    align-items: center;
    justify-content: center;
    font-size: 38px;
    font-weight: 900;
}

.alert {
    background: #a91f34;
    color: #222;
    margin-right: 43px;
}

.help {
    background: #fff;
    color: #222;
    margin: 0 44px 0 43px;
}

.person {
    margin-right: 13px;
}

.sign-out-icon {
    margin-left: 54px;
    margin-right: 12px;
}

/* app body */
.app-body {
    flex: 1;
    display: flex;
    min-height: 0;
}

.sidebar {
    width: 600px;
    background: #dcdcdc;
    flex-shrink: 0;
}

.sidebar-title {
    height: 70px;
    padding: 0 21px;
    display: flex;
    align-items: center;
    background: #444;
    border-bottom: 2px solid #bbb;
    color: #fff;
    font-size: 32px;
    font-weight: 700;
}

.side-item {
    position: relative;
    height: 88px;
    display: flex;
    align-items: center;
    gap: 14px;
    padding: 0 0 3px 51px;
    font-size: 35px;
    color: #444;
}

.side-item svg {
    width: 36px;
}

.side-item.selected {
    background: #5ab07c;
    color: #fff;
}

.side-arrow {
    position: absolute;
    left: 17px;
    border-top: 10px solid transparent;
    border-bottom: 10px solid transparent;
    border-left: 13px solid #111;
}

.main {
    flex: 1;
    display: flex;
    flex-direction: column;
    background: #f4f4f4;
}

.breadcrumb {
    height: 94px;
    padding: 2px 0 0 47px;
    display: flex;
    align-items: center;
    background: #fff;
}

.bc-db {
    margin-top: 2px;
}

.bc-title {
    margin-left: 44px;
    font-size: 44.5px;
    font-weight: 700;
    color: #2a62b4;
}

.bc-sep {
    margin: 8px 0 0 24px;
    font-size: 30px;
    color: #555;
}

.bc-repo {
    margin: 8px 0 0 26px;
}

.bc-repo-name {
    margin: 10px 0 0 15px;
    font-size: 28px;
    font-weight: 700;
    color: #333;
}

.view-links {
    height: 84px;
    padding: 0 12px 17px 16px;
    display: flex;
    align-items: flex-end;
    justify-content: space-between;
    background: #fff;
    border-bottom: 3px solid #c4c4c4;
    color: #2a62a8;
}

.html-view {
    font-size: 31px;
}

.advanced {
    font-size: 32.5px;
}

.tree {
    background: #fff;
}

.tree-row {
    height: 54px;
    display: flex;
    align-items: center;
    font-size: 31.5px;
    color: #3a3a3a;
}

.version {
    letter-spacing: -0.9px;
}

.level-0 { padding-left: 20px; }
.level-1 { padding-left: 60px; }
.level-2 { padding-left: 100px; }
.level-3 { padding-left: 140px; }
.level-4 { padding-left: 180px; }

.conn {
    width: 32px;
    height: 54px;
    overflow: hidden;
}

.node {
    width: 32px;
    height: 30px;
    margin: 4px 9px 0 0;
}

/* consent banner */
.banner {
    height: 183px;
    flex-shrink: 0;
    display: flex;
    align-items: center;
    padding-left: 538px;
    background: linear-gradient(180deg, #fff 55%, #e6e6e6 100%);
    border-top: 3px solid #9a9a9a;
    border-bottom: 3px solid #9a9a9a;
}

.banner-icon {
    margin-right: 41px;
}

.banner-text {
    margin: 13px 0 0;
    width: 1569px;
    font-size: 31.75px;
    line-height: 48px;
    color: #555;
}

.banner-text a {
    color: #1f5ec4;
}

.ok-btn {
    width: 148px;
    height: 82px;
    margin-top: 12px;
    border: 0;
    border-radius: 9px;
    background: #1a5cc8;
    color: #fff;
    font-family: inherit;
    font-size: 30px;
    font-weight: 700;
}

/* dock */
.dock {
    width: 2813px;
    height: 98px;
    margin: 8px 0 0 63px;
    padding: 14px 0 0 13px;
    display: flex;
    gap: 20.25px;
    border: 2px solid #7c8a9a;
    border-radius: 24px;
    background: linear-gradient(90deg, #5f7086 0%, #667a92 30%, #77808c 42%, #94897e 50%, #7c8490 60%, #5f7490 75%, #5f7290 100%);
}

.dock-item {
    position: relative;
    width: 60px;
    height: 60px;
}

.dock-item svg {
    width: 60px;
    height: 60px;
    overflow: visible;
}

.dock-item.on::after {
    content: "";
    position: absolute;
    left: 26px;
    top: 65px;
    width: 8px;
    height: 8px;
    border-radius: 50%;
    background: #111;
}

.dock-item.downloads {
    margin-left: -2px;
}

.dock-item svg.folder {
    height: 68px;
    width: 64px;
    margin-top: -6px;
}

.dock-item svg.trash {
    height: 68px;
    margin-top: -4px;
}

.dock-badge {
    position: absolute;
    top: -8px;
    right: -12px;
    width: 29px;
    height: 29px;
    border-radius: 50%;
    background: #e04b3e;
    color: #fff;
    font-family: Inter, sans-serif;
    font-size: 18px;
    line-height: 29px;
    text-align: center;
}

.dock-sep {
    width: 2px;
    height: 68px;
    margin: -2px 8px 0;
    background: #2a4060;
}

.cal-month {
    font-family: Inter, sans-serif;
    font-size: 12px;
    fill: #fff;
    text-anchor: middle;
}

.cal-day {
    font-family: Inter, sans-serif;
    font-size: 38px;
    font-weight: 300;
    fill: #222;
    text-anchor: middle;
}

.app-letter {
    font-family: "Liberation Sans", sans-serif;
    font-size: 17px;
    fill: #fff;
    text-anchor: middle;
}

.prompt {
    font-family: "Liberation Mono", monospace;
    font-size: 24px;
    fill: #54d058;
    text-anchor: middle;
}
```
